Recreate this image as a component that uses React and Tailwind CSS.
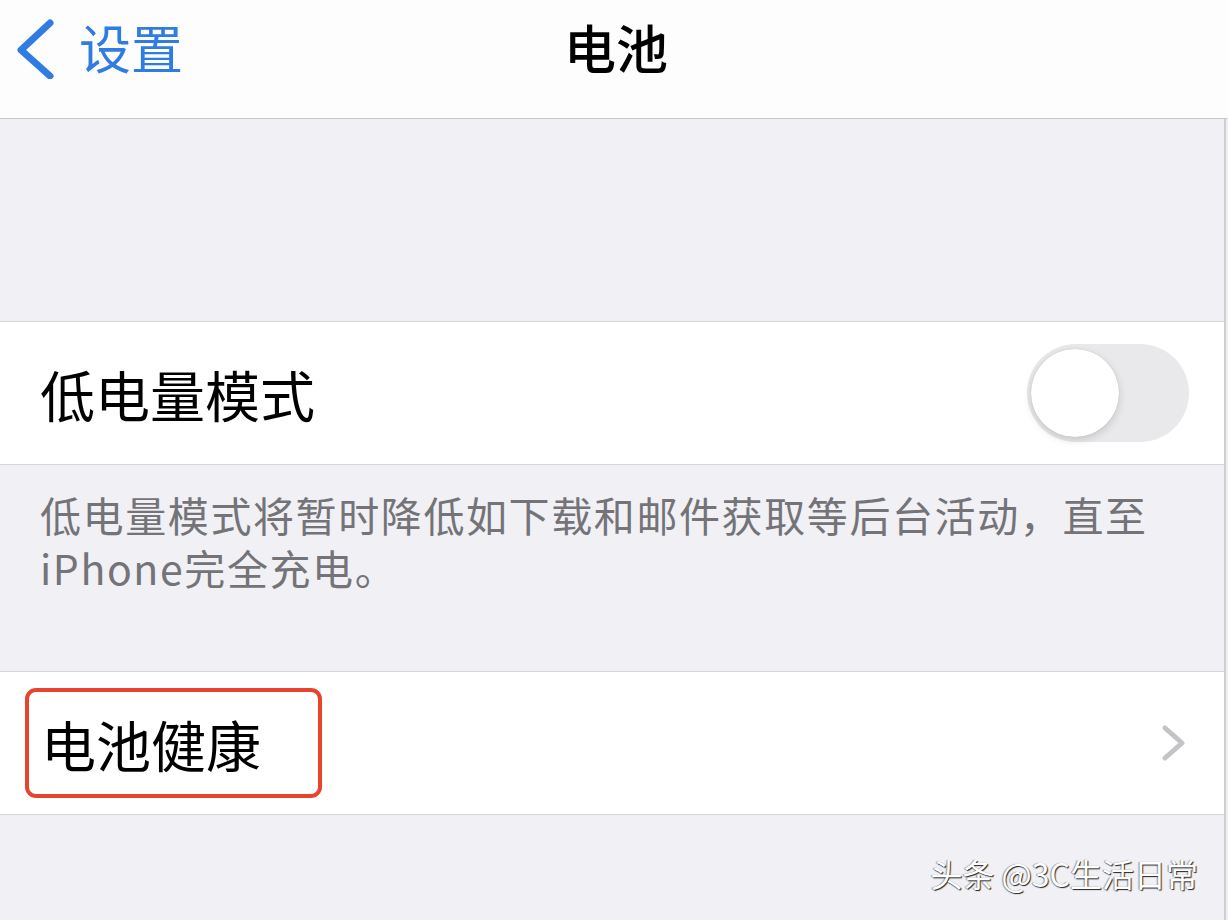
export default function App() {
  const font = { fontFamily: '"Noto Sans CJK SC", "Noto Sans", sans-serif' };
  return (
    <div className="w-[1228px] h-[920px] bg-[#f0f0f5] overflow-hidden relative" style={font}>
      {/* nav bar */}
      <div className="h-[119px] bg-[#fdfdfd] border-b border-[#c6c6c9] grid grid-cols-[1fr_auto_1fr] items-start pt-[14px]">
        <div className="flex items-center pl-[16px]">
          <svg width="40" height="62" viewBox="0 0 40 62" className="mt-[1px]">
            <polyline points="34,6 5,33 34,59" fill="none" stroke="#2f7ce3" strokeWidth="7" strokeLinecap="round" strokeLinejoin="round" />
          </svg>
          <span className="ml-[23px] text-[52px] leading-[66px] text-[#2f7ce3]">设置</span>
        </div>
        <div className="text-[52px] leading-[66px] font-medium text-black pl-[4px]">电池</div>
        <div />
      </div>

      <div className="w-[1226px] border-r-2 border-[#cfcfd3]">
        <div className="h-[202px]" />

        {/* low power row */}
        <div className="h-[144px] bg-white border-y border-[#d6d6da] flex items-center justify-between pl-[40px] pr-[35px]">
          <span className="text-[55px] leading-none text-black">低电量模式</span>
          <div className="w-[162px] h-[98px] rounded-full bg-[#e9e9eb] relative">
            <div className="absolute left-[4px] top-[5px] w-[88px] h-[88px] rounded-full bg-white shadow-[0_3px_8px_rgba(0,0,0,0.15),0_0_1px_rgba(0,0,0,0.2)]" />
          </div>
        </div>

        {/* description */}
        <div className="h-[206px] pl-[40px] pt-[23px] text-[41px] leading-[53px] tracking-[1.6px] text-[#737378]">
          <p>低电量模式将暂时降低如下载和邮件获取等后台活动，直至</p>
          <p>iPhone完全充电。</p>
        </div>

        {/* battery health row */}
        <div className="h-[144px] bg-white border-y border-[#d6d6da] flex items-center justify-between pl-[25px] pr-[36px]">
          <div className="w-[297px] h-[110px] border-[4px] border-[#e8432c] rounded-[11px] flex items-center pl-[12px]">
            <span className="text-[55px] leading-none text-black">电池健康</span>
          </div>
          <svg width="28" height="40" viewBox="0 0 28 40">
            <polyline points="5,5 22,20 5,35" fill="none" stroke="#c4c4c8" strokeWidth="5" strokeLinecap="round" strokeLinejoin="round" />
          </svg>
        </div>

        <div className="h-[110px] flex justify-end items-start pr-[26px] pt-[42px]">
          <span className="text-[32px] leading-none text-white [text-shadow:1px_1px_1px_rgba(0,0,0,0.85),-1px_0_1px_rgba(0,0,0,0.4)]">头条 @3C生活日常</span>
        </div>
      </div>
    </div>
  );
}
